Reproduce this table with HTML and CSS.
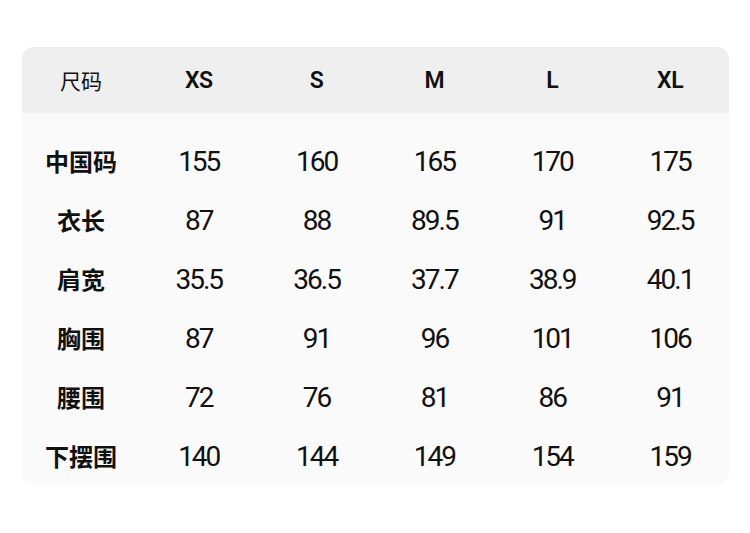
FILE: index.html
```html
<!DOCTYPE html>
<html lang="zh">
<head>
<meta charset="utf-8">
<link rel="stylesheet" href="styles.css">
</head>
<body>
<div class="page">
  <div class="card">
    <div class="row head">
      <div class="cell label-h">尺码</div>
      <div class="cell size">XS</div>
      <div class="cell size">S</div>
      <div class="cell size">M</div>
      <div class="cell size">L</div>
      <div class="cell size">XL</div>
    </div>
    <div class="body">
      <div class="row">
        <div class="cell label">中国码</div>
        <div class="cell num">155</div><div class="cell num">160</div><div class="cell num">165</div><div class="cell num">170</div><div class="cell num">175</div>
      </div>
      <div class="row">
        <div class="cell label">衣长</div>
        <div class="cell num">87</div><div class="cell num">88</div><div class="cell num">89.5</div><div class="cell num">91</div><div class="cell num">92.5</div>
      </div>
      <div class="row">
        <div class="cell label">肩宽</div>
        <div class="cell num">35.5</div><div class="cell num">36.5</div><div class="cell num">37.7</div><div class="cell num">38.9</div><div class="cell num">40.1</div>
      </div>
      <div class="row">
        <div class="cell label">胸围</div>
        <div class="cell num">87</div><div class="cell num">91</div><div class="cell num">96</div><div class="cell num">101</div><div class="cell num">106</div>
      </div>
      <div class="row">
        <div class="cell label">腰围</div>
        <div class="cell num">72</div><div class="cell num">76</div><div class="cell num">81</div><div class="cell num">86</div><div class="cell num">91</div>
      </div>
      <div class="row">
        <div class="cell label">下摆围</div>
        <div class="cell num">140</div><div class="cell num">144</div><div class="cell num">149</div><div class="cell num">154</div><div class="cell num">159</div>
      </div>
    </div>
  </div>
</div>
</body>
</html>
```

FILE: styles.css
```css
html, body {
  margin: 0;
  padding: 0;
  background: #ffffff;
}
.page {
  width: 750px;
  height: 533px;
  padding: 47px 21px 0 22px;
  box-sizing: border-box;
}
.card {
  width: 707px;
  border-radius: 12px;
  overflow: hidden;
  background: #fafafa;
  color: #111111;
  font-family: Roboto, "Noto Sans CJK SC", sans-serif;
}
.row {
  display: grid;
  grid-template-columns: repeat(6, 1fr);
  height: 59px;
  align-items: center;
}
.head {
  height: 66px;
  background: #efefef;
}
.body {
  padding-top: 18px;
}
.cell {
  text-align: center;
  line-height: 1;
}
.label-h {
  font-family: "Noto Sans CJK SC", sans-serif;
  font-size: 21px;
  font-weight: 400;
}
.size {
  font-size: 23px;
  font-weight: 600;
  letter-spacing: -0.5px;
}
.label {
  font-family: "Noto Sans CJK SC", sans-serif;
  font-size: 24px;
  font-weight: 700;
}
.num {
  font-size: 28px;
  font-weight: 400;
  letter-spacing: -2px;
  padding-top: 2px;
}
```
